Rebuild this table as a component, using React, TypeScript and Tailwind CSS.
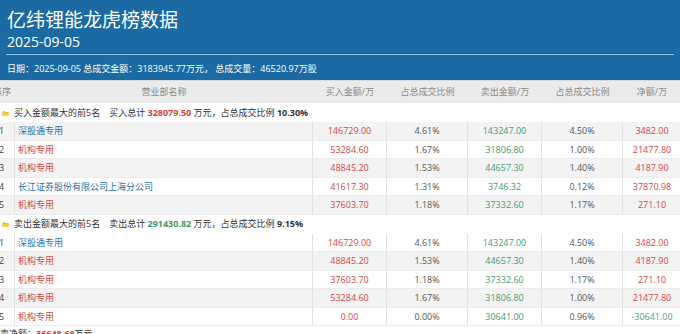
const font = "font-['Open_Sans','Noto_Sans_CJK_SC',sans-serif]";

type Row = {
  rank: number;
  name: string;
  blue?: boolean;
  buy: string;
  buyPct: string;
  sell: string;
  sellPct: string;
  net: string;
  negative?: boolean;
  gray?: boolean;
};

const buyRows: Row[] = [
  { rank: 1, name: '深股通专用', blue: true, buy: '146729.00', buyPct: '4.61%', sell: '143247.00', sellPct: '4.50%', net: '3482.00', gray: true },
  { rank: 2, name: '机构专用', buy: '53284.60', buyPct: '1.67%', sell: '31806.80', sellPct: '1.00%', net: '21477.80' },
  { rank: 3, name: '机构专用', buy: '48845.20', buyPct: '1.53%', sell: '44657.30', sellPct: '1.40%', net: '4187.90', gray: true },
  { rank: 4, name: '长江证券股份有限公司上海分公司', blue: true, buy: '41617.30', buyPct: '1.31%', sell: '3746.32', sellPct: '0.12%', net: '37870.98' },
  { rank: 5, name: '机构专用', buy: '37603.70', buyPct: '1.18%', sell: '37332.60', sellPct: '1.17%', net: '271.10', gray: true },
];

const sellRows: Row[] = [
  { rank: 1, name: '深股通专用', blue: true, buy: '146729.00', buyPct: '4.61%', sell: '143247.00', sellPct: '4.50%', net: '3482.00' },
  { rank: 2, name: '机构专用', buy: '48845.20', buyPct: '1.53%', sell: '44657.30', sellPct: '1.40%', net: '4187.90', gray: true },
  { rank: 3, name: '机构专用', buy: '37603.70', buyPct: '1.18%', sell: '37332.60', sellPct: '1.17%', net: '271.10' },
  { rank: 4, name: '机构专用', buy: '53284.60', buyPct: '1.67%', sell: '31806.80', sellPct: '1.00%', net: '21477.80', gray: true },
  { rank: 5, name: '机构专用', buy: '0.00', buyPct: '0.00%', sell: '30641.00', sellPct: '0.96%', net: '-30641.00', negative: true },
];

const cols = 'grid grid-cols-[26px_298px_74px_81px_74px_81px_58px]';

function FolderIcon() {
  return (
    <svg width="7" height="6" viewBox="0 0 7 6" className="shrink-0">
      <path d="M0.5 1.2h2.2l0.6 0.7h3.2v3.6h-6z" fill="#f0b428" />
      <path d="M0.5 2.6h6v2.9h-6z" fill="#f7c948" />
    </svg>
  );
}

function TableRow({ row }: { row: Row }) {
  const cell = 'flex items-center border-r border-[#e2e2e2]';
  return (
    <div className={`${cols} h-[18.5px] border-b border-[#ececec] ${row.gray ? 'bg-[#f3f3f3]' : 'bg-white'}`}>
      <div className={`${cell} justify-center text-[#444]`}>{row.rank}</div>
      <div className={`${cell} pl-[3px] ${row.blue ? 'text-[#2e6da4]' : 'text-[#cf4848]'}`}>{row.name}</div>
      <div className={`${cell} justify-center text-[#cf4848]`}>{row.buy}</div>
      <div className={`${cell} justify-center text-[#555]`}>{row.buyPct}</div>
      <div className={`${cell} justify-center text-[#4a9a6c]`}>{row.sell}</div>
      <div className={`${cell} justify-center text-[#555]`}>{row.sellPct}</div>
      <div className={`flex items-center justify-center ${row.negative ? 'text-[#5b9a78]' : 'text-[#cf4848]'}`}>{row.net}</div>
    </div>
  );
}

function SectionHeader({ label, kind, total, pct, green }: { label: string; kind: string; total: string; pct: string; green?: boolean }) {
  return (
    <div className="flex h-[19px] items-center gap-[5px] bg-white pl-[13px] text-[#333]">
      <FolderIcon />
      <span>{label}</span>
      <span className="ml-[4px]">
        {kind}
        {' '}
        <b className={green ? 'text-[#3f9a5e]' : 'text-[#cf3f3f]'}>{total}</b>
        {' 万元，占总成交比例 '}
        <b>{pct}</b>
      </span>
    </div>
  );
}

export default function App() {
  return (
    <div className={`h-[334px] w-[680px] overflow-hidden bg-white ${font}`}>
      <header className="bg-[#1b6aa3] px-[6px] pt-[7px] pb-[5px] text-white">
        <h1 className="pl-[1px] text-[19px] leading-[26px]">亿纬锂能龙虎榜数据</h1>
        <p className="pl-[1px] text-[14px] leading-[18px]">2025-09-05</p>
        <div className="mt-[2px] h-[2px] border-t border-[#16598a] bg-[#8cc6ee]" />
        <p className="mt-[8px] pl-[1px] text-[9px] leading-[12px]">
          日期：2025-09-05 总成交金额：3183945.77万元， 总成交量：46520.97万股
        </p>
      </header>

      <div className="-ml-[11px] w-[692px] border-t border-[#d9d9d9] text-[9px]">
        <div className={`${cols} h-[22px] items-center bg-[#ebebeb] text-[#8a8a8a]`}>
          <div className="text-center">排序</div>
          <div className="text-center">营业部名称</div>
          <div className="text-center">买入金额/万</div>
          <div className="text-center">占总成交比例</div>
          <div className="text-center">卖出金额/万</div>
          <div className="text-center">占总成交比例</div>
          <div className="text-center">净额/万</div>
        </div>

        <SectionHeader label="买入金额最大的前5名" kind="买入总计" total="328079.50" pct="10.30%" />
        {buyRows.map((r) => (
          <TableRow key={`b${r.rank}`} row={r} />
        ))}

        <SectionHeader label="卖出金额最大的前5名" kind="卖出总计" total="291430.82" pct="9.15%" green />
        {sellRows.map((r) => (
          <TableRow key={`s${r.rank}`} row={r} />
        ))}

        <div className="pl-[2px] pt-[1px] text-[9px] leading-[14px] text-[#333]">
          买卖净额：<span className="font-bold text-[#cf3f3f]">36648.68</span>万元
        </div>
      </div>
    </div>
  );
}
